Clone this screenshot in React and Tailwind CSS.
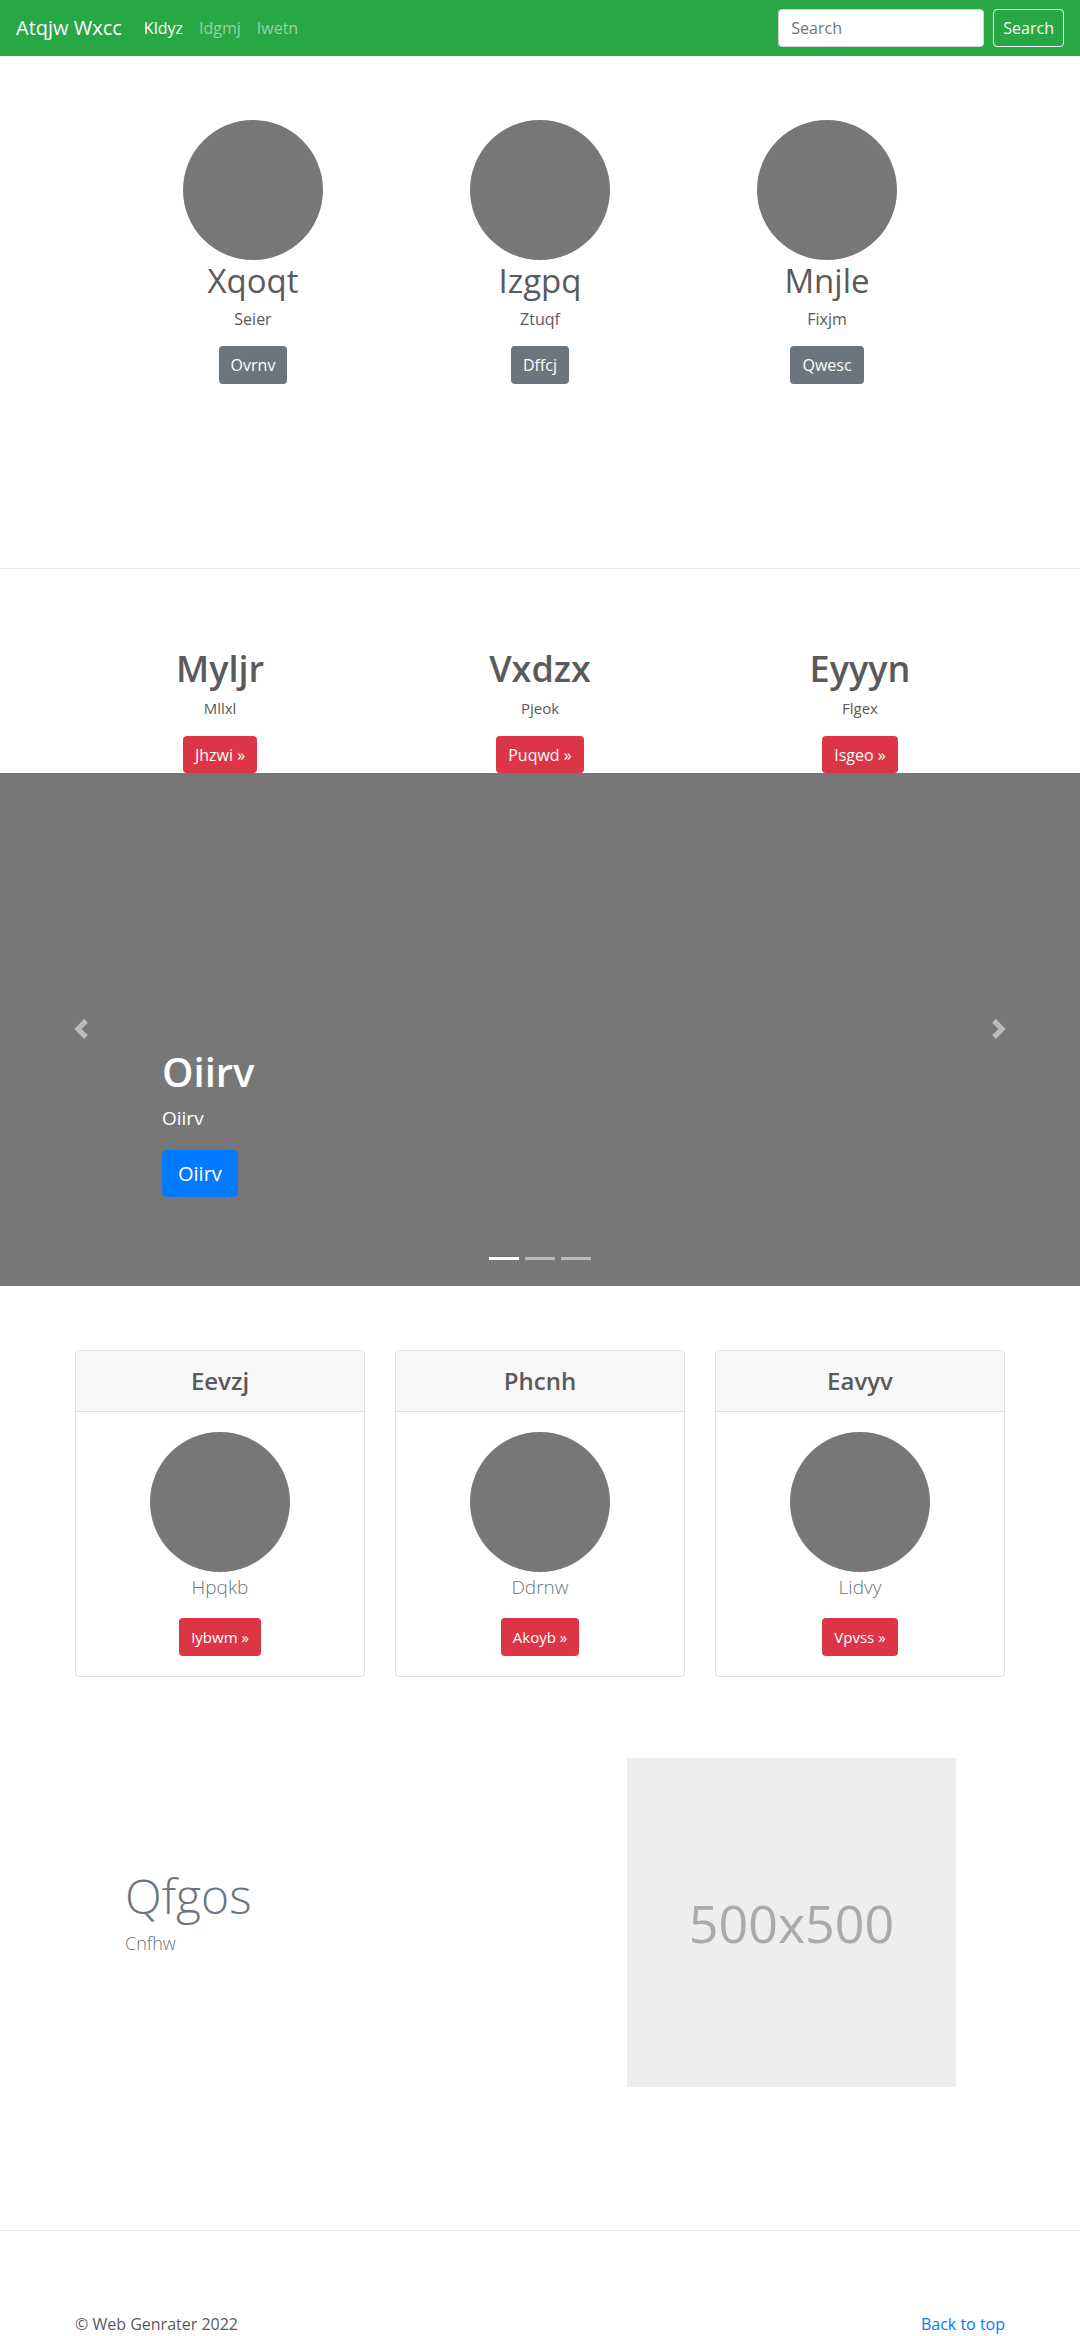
import React from "react";

const font = { fontFamily: '"Open Sans", "Noto Sans", sans-serif' };

function Circle({ size = "w-[140px] h-[140px]" }) {
  return <div className={`${size} rounded-full bg-[#777]`} />;
}

function Navbar() {
  return (
    <header className="h-[56px] bg-[#28a745] px-4 flex items-center justify-between">
      <div className="flex items-center">
        <span className="text-[20px] leading-[30px] text-white mr-[14px]">Atqjw Wxcc</span>
        <nav className="flex items-center text-[16px] leading-6">
          <a className="px-2 text-white">Kldyz</a>
          <a className="px-2 text-white/50">Idgmj</a>
          <a className="px-2 text-white/50">Iwetn</a>
        </nav>
      </div>
      <div className="flex items-center">
        <input
          placeholder="Search"
          className="w-[206px] h-[38px] bg-white rounded border border-[#ced4da] px-3 text-[16px] text-[#495057] placeholder:text-[#6c757d] mr-[9px]"
        />
        <button className="h-[38px] px-[9px] rounded border border-[#f8f9fa] text-[#f8f9fa] text-[16px]">
          Search
        </button>
      </div>
    </header>
  );
}

function Profiles() {
  const items = [
    ["Xqoqt", "Seier", "Ovrnv"],
    ["Izgpq", "Ztuqf", "Dffcj"],
    ["Mnjle", "Fixjm", "Qwesc"],
  ];
  return (
    <section className="pt-[64px] pb-[184px] flex justify-center">
      {items.map(([title, sub, btn]) => (
        <div key={title} className="w-[287px] flex flex-col items-center text-[#5a5a5a]">
          <Circle />
          <h2 className="text-[33px] leading-[42px] font-normal">{title}</h2>
          <p className="mt-[5px] text-[16px] leading-6">{sub}</p>
          <button className="mt-[15px] h-[38px] px-3 rounded bg-[#6c757d] text-white text-[16px]">
            {btn}
          </button>
        </div>
      ))}
    </section>
  );
}

function Features() {
  const items = [
    ["Myljr", "Mllxl", "Jhzwi"],
    ["Vxdzx", "Pjeok", "Puqwd"],
    ["Eyyyn", "Flgex", "Isgeo"],
  ];
  return (
    <section className="pt-[78px]">
      <div className="w-[960px] mx-auto grid grid-cols-3">
        {items.map(([title, sub, btn]) => (
          <div key={title} className="flex flex-col items-center text-[#5a5a5a]">
            <h2 className="text-[36px] leading-[43px] font-semibold">{title}</h2>
            <p className="mt-[6px] text-[15px] leading-6">{sub}</p>
            <button className="mt-4 h-[37px] px-3 rounded bg-[#dc3545] text-white text-[16px]">
              {btn} »
            </button>
          </div>
        ))}
      </div>
    </section>
  );
}

function Carousel() {
  return (
    <section className="relative h-[513px] bg-[#777]">
      {/* prev / next controls */}
      <div className="absolute left-[71px] top-[246px] w-5 h-5 opacity-50">
        <svg viewBox="0 0 8 8" className="w-5 h-5" fill="#fff">
          <path d="M5.25 0l-4 4 4 4 1.5-1.5L4.25 4l2.5-2.5L5.25 0z" />
        </svg>
      </div>
      <div className="absolute right-[71px] top-[246px] w-5 h-5 opacity-50">
        <svg viewBox="0 0 8 8" className="w-5 h-5" fill="#fff">
          <path d="M2.75 0l-1.5 1.5L3.75 4l-2.5 2.5L2.75 8l4-4-4-4z" />
        </svg>
      </div>
      <div className="absolute left-[162px] bottom-[89px] flex flex-col items-start text-white">
        <h1 className="text-[40px] leading-[48px] font-semibold">Oiirv</h1>
        <p className="mt-[9px] text-[19px] leading-[26px]">Oiirv</p>
        <button className="mt-[19px] h-[47px] px-4 rounded-[5px] bg-[#007bff] text-white text-[20px]">
          Oiirv
        </button>
      </div>
      <div className="absolute bottom-[26px] left-0 right-0 flex justify-center gap-[6px]">
        <span className="w-[30px] h-[3px] bg-white" />
        <span className="w-[30px] h-[3px] bg-white/50" />
        <span className="w-[30px] h-[3px] bg-white/50" />
      </div>
    </section>
  );
}

function Cards() {
  const items = [
    ["Eevzj", "Hpqkb", "Iybwm"],
    ["Phcnh", "Ddrnw", "Akoyb"],
    ["Eavyv", "Lidvy", "Vpvss"],
  ];
  return (
    <section className="pt-[64px]">
      <div className="w-[960px] mx-auto grid grid-cols-3">
        {items.map(([title, lead, btn]) => (
          <div key={title} className="px-[15px]">
            <div className="border border-[#dfdfdf] rounded">
              <div className="h-[61px] bg-[#f7f7f7] border-b border-[#dfdfdf] flex items-center justify-center">
                <h4 className="text-[24px] font-semibold text-[#5a5a5a]">{title}</h4>
              </div>
              <div className="p-5 flex flex-col items-center">
                <Circle />
                <p className="text-[19px] leading-[30px] font-light text-[#6c757d]">{lead}</p>
                <button className="mt-4 h-[38px] px-3 rounded bg-[#dc3545] text-white text-[15px]">
                  {btn} »
                </button>
              </div>
            </div>
          </div>
        ))}
      </div>
    </section>
  );
}

function Featurette() {
  return (
    <section className="pt-[81px] pb-[143px]">
      <div className="w-[930px] mx-auto flex items-start">
        <div className="flex-1 pl-[50px] pt-[114px] text-[#6c757d]">
          <h2 className="text-[48px] leading-[48px] font-light">Qfgos</h2>
          <p className="mt-[10px] text-[18px] leading-[27px] font-light">Cnfhw</p>
        </div>
        <div className="w-[329px] h-[329px] mr-[49px] bg-[#eee] flex items-center justify-center">
          <span className="text-[52px] text-[#aaa]">500x500</span>
        </div>
      </div>
    </section>
  );
}

function Footer() {
  return (
    <footer className="border-t border-[#e6e6e6] pt-[81px] pb-8">
      <div className="w-[930px] mx-auto flex justify-between text-[16px] leading-6">
        <p className="text-[#5a5a5a]">© Web Genrater 2022</p>
        <a className="text-[#007bff]">Back to top</a>
      </div>
    </footer>
  );
}

export default function App() {
  return (
    <div className="bg-white min-h-screen" style={font}>
      <Navbar />
      <Profiles />
      <div className="border-t border-[#e6e6e6]" />
      <Features />
      <Carousel />
      <Cards />
      <Featurette />
      <Footer />
    </div>
  );
}
